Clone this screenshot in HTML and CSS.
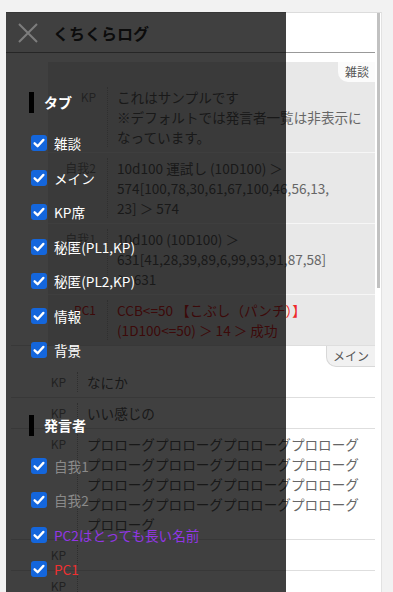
FILE: index.html
```html
<!DOCTYPE html>
<html lang="ja">
<head>
<meta charset="utf-8">
<title>くちくらログ</title>
<link rel="stylesheet" href="styles.css">
</head>
<body>
<svg class="defs" width="0" height="0" aria-hidden="true">
  <symbol id="chk" viewBox="0 0 16 16">
    <rect width="16" height="16" rx="3" fill="#1466dc"/>
    <path d="M3.6 8.3 L6.6 11.2 L12.4 4.9" fill="none" stroke="#fff" stroke-width="2.3" stroke-linecap="round" stroke-linejoin="round"/>
  </symbol>
</svg>
<div class="app">
  <div class="content">
    <header class="bar"><span class="title">くちくらログ</span></header>
    <main class="log">
      <section class="tab tab-zatsu">
        <div class="tabhead"><span class="tabname">雑談</span></div>
        <div class="row"><div class="name">KP</div><div class="text">これはサンプルです<br>※デフォルトでは発言者一覧は非表示に<br>なっています。</div></div>
        <div class="row"><div class="name">自我2</div><div class="text">10d100 運試し (10D100) ＞<br>574[100,78,30,61,67,100,46,56,13,<br>23] ＞ 574</div></div>
        <div class="row"><div class="name">自我1</div><div class="text">10d100 (10D100) ＞<br>631[41,28,39,89,6,99,93,91,87,58]<br>＞ 631</div></div>
        <div class="row red"><div class="name">PC1</div><div class="text">CCB&lt;=50 【こぶし（パンチ）】<br>(1D100&lt;=50) ＞ 14 ＞ 成功</div></div>
      </section>
      <section class="tab tab-main">
        <div class="tabhead"><span class="tabname">メイン</span></div>
        <div class="row"><div class="name">KP</div><div class="text">なにか</div></div>
        <div class="row"><div class="name">KP</div><div class="text">いい感じの</div></div>
        <div class="row"><div class="name">KP</div><div class="text">プロローグプロローグプロローグプロローグ<br>プロローグプロローグプロローグプロローグ<br>プロローグプロローグプロローグプロローグ<br>プロローグプロローグプロローグプロローグ<br>プロローグ</div></div>
        <div class="row"><div class="name">KP</div><div class="text"></div></div>
        <div class="row"><div class="name">KP</div><div class="text"></div></div>
      </section>
    </main>
  </div>
  <div class="scroll"><div class="thumb"></div></div>

  <aside class="drawer">
    <div class="close">
      <svg width="20" height="20" viewBox="0 0 20 20"><path d="M1 1 L19 19 M19 1 L1 19" stroke="#7d7d7d" stroke-width="2" fill="none"/></svg>
    </div>
    <div class="group first">
      <h2 class="heading">タブ</h2>
      <ul class="items">
        <li class="item"><svg class="box"><use href="#chk"/></svg><span>雑談</span></li>
        <li class="item"><svg class="box"><use href="#chk"/></svg><span>メイン</span></li>
        <li class="item"><svg class="box"><use href="#chk"/></svg><span>KP席</span></li>
        <li class="item"><svg class="box"><use href="#chk"/></svg><span>秘匿(PL1,KP)</span></li>
        <li class="item"><svg class="box"><use href="#chk"/></svg><span>秘匿(PL2,KP)</span></li>
        <li class="item"><svg class="box"><use href="#chk"/></svg><span>情報</span></li>
        <li class="item"><svg class="box"><use href="#chk"/></svg><span>背景</span></li>
      </ul>
    </div>
    <div class="group second">
      <h2 class="heading">発言者</h2>
      <ul class="items">
        <li class="item"><svg class="box"><use href="#chk"/></svg><span class="c-gray">自我1</span></li>
        <li class="item"><svg class="box"><use href="#chk"/></svg><span class="c-gray">自我2</span></li>
        <li class="item"><svg class="box"><use href="#chk"/></svg><span class="c-purple">PC2はとっても長い名前</span></li>
        <li class="item"><svg class="box"><use href="#chk"/></svg><span class="c-red">PC1</span></li>
      </ul>
    </div>
  </aside>
</div>
</body>
</html>
```
FILE: styles.css
```css
* { box-sizing: border-box; }
html, body { margin: 0; padding: 0; }
body {
  background: #f2f2f2;
  font-family: "Noto Sans CJK JP", "Noto Sans", sans-serif;
  overflow: hidden;
  height: 592px;
}
.defs { position: absolute; width: 0; height: 0; overflow: hidden; }

.app {
  position: relative;
  margin: 12px 0 0 6px;
  width: 376px;
  height: 600px;
  background: #fff;
  border-top: 1px solid #dcdcdc;
  border-right: 1px solid #e2e2e2;
  display: flex;
}
.content { flex: 1; min-width: 0; }
.scroll { width: 6px; background: #fff; padding-left: 2px; }
.thumb { width: 3px; height: 275px; background: #c1c1c1; }

.bar {
  height: 40px;
  border-bottom: 1px solid #999;
  display: flex;
  align-items: center;
  padding-left: 47px;
}
.title { font-size: 16px; font-weight: bold; color: #333; letter-spacing: 0; }

.log { padding-top: 9px; }

.tab-zatsu { margin-left: 42px; background: #e8e8e8; }
.tab-main { margin-left: 5px; border-top: 1px solid #dedede; }

.tabhead { display: flex; justify-content: flex-end; }
.tabname {
  height: 20px;
  line-height: 20px;
  font-size: 12px;
  color: #555;
  padding: 0 6px;
  border-bottom-left-radius: 10px;
}
.tab-zatsu .tabname { background: #fbfbfb; padding: 0 6px 0 7px; }
.tab-main .tabname { background: #f1f1f1; border-left: 1px solid #d8d8d8; border-bottom: 1px solid #d8d8d8; height: 21px; }

.row {
  display: grid;
  padding: 5px 0;
}
.tab-zatsu .row { grid-template-columns: 59px 1fr; }
.tab-main .row { grid-template-columns: 66px 1fr; }
.tab-zatsu .row + .row { border-top: 1px solid #f6f6f6; }
.tab-main .row + .row { border-top: 1px solid #dedede; }

.name {
  text-align: right;
  padding-right: 11px;
  font-size: 12px;
  line-height: 20px;
  color: #888;
}
.text {
  border-left: 1px dotted #bbb;
  padding-left: 9px;
  font-size: 13.6px;
  line-height: 20px;
  color: #666;
  white-space: nowrap;
  overflow: hidden;
  min-height: 19px;
}
.row.red .name, .row.red .text { color: #ee2a2a; }

.drawer {
  position: absolute;
  left: 0;
  top: -1px;
  width: 280px;
  height: 601px;
  background: rgba(0, 0, 0, 0.75);
  color: #fff;
}
.close {
  height: 41px;
  display: flex;
  align-items: center;
  padding-left: 12px;
}
.close svg { display: block; }

.group { padding-left: 23px; }
.group.first { margin-top: 39px; }
.group.second { margin-top: 47px; }
.heading {
  margin: 0;
  height: 21px;
  line-height: 21px;
  border-left: 5px solid #000;
  padding-left: 10px;
  font-size: 14px;
  font-weight: bold;
  color: #fff;
}
.items { list-style: none; margin: 13px 0 0; padding: 0; }
.item {
  height: 34.5px;
  display: flex;
  align-items: center;
  gap: 7px;
  padding-left: 2px;
  font-size: 13.6px;
}
.box { width: 16px; height: 16px; flex: none; display: block; }
.c-gray { color: #8a8a8a; }
.c-purple { color: #9236e6; }
.c-red { color: #f03030; }
```
